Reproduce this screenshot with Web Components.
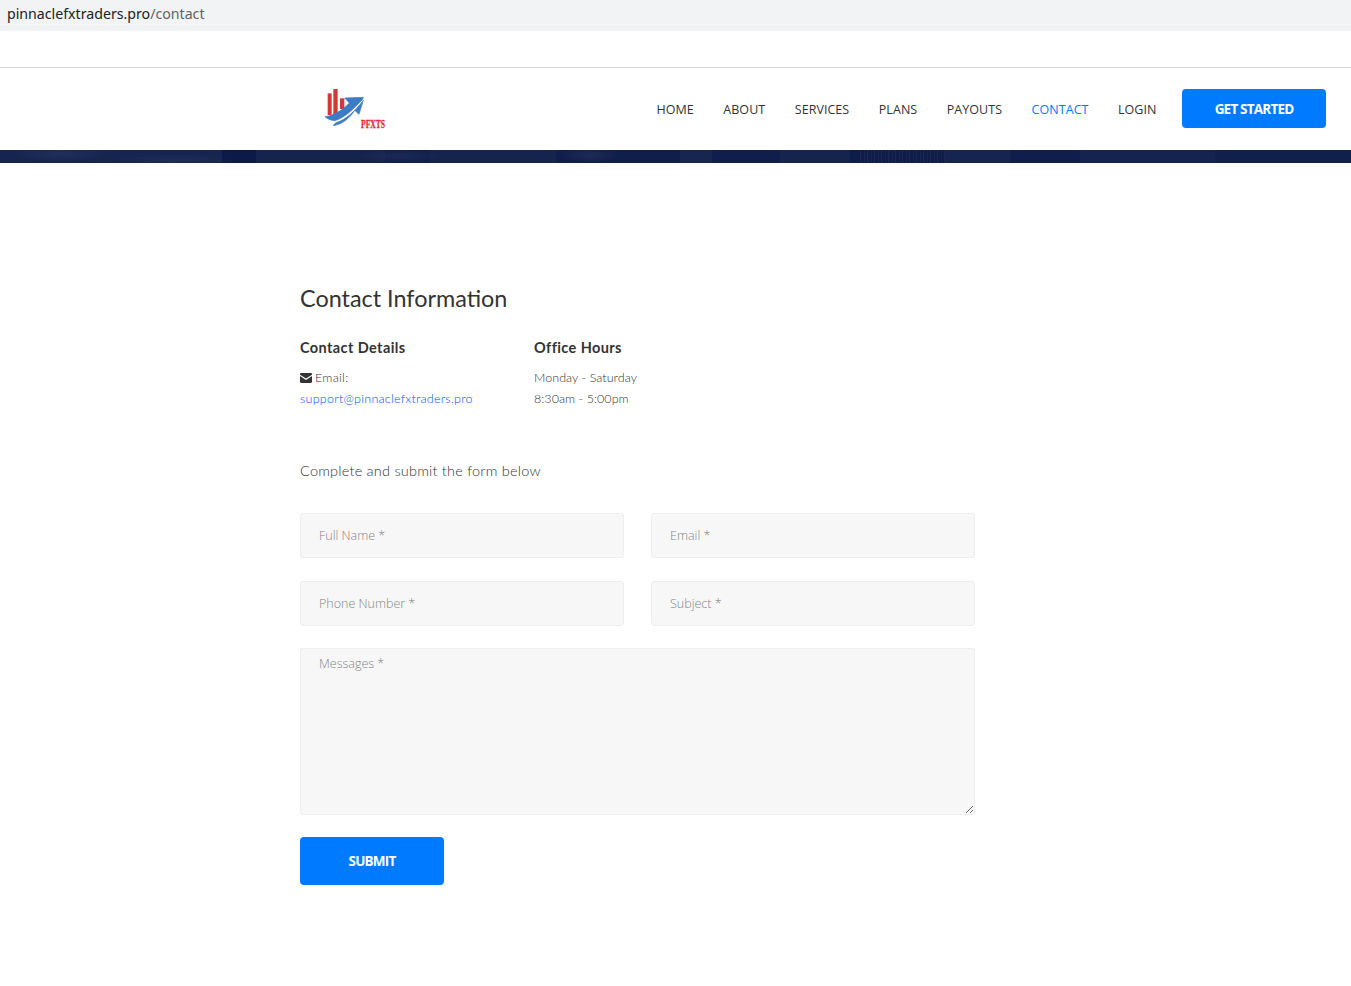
<!DOCTYPE html>
<html lang="en">
<head>
<meta charset="utf-8">
<title>Contact</title>
<style>
  html, body { margin: 0; padding: 0; background: #fff; }
  body { font-family: "Open Sans", sans-serif; color: #333; }
</style>
</head>
<body>
<address-bar></address-bar>
<site-header></site-header>
<page-banner></page-banner>
<contact-section></contact-section>

<script>
class AddressBar extends HTMLElement {
  constructor() {
    super();
    this.attachShadow({ mode: 'open' });
    this.shadowRoot.innerHTML = `
      <style>
        :host { display: block; }
        .url {
          height: 31px;
          background: #f1f3f4;
          padding-left: 7px;
          font: 14.17px/27px "Noto Sans", "Open Sans", sans-serif;
          color: #202124;
        }
        .url span { color: #5f6368; }
        .gap { height: 36px; border-bottom: 1px solid #dadce0; }
      </style>
      <div class="url">pinnaclefxtraders.pro<span>/contact</span></div>
      <div class="gap"></div>
    `;
  }
}

class SiteHeader extends HTMLElement {
  constructor() {
    super();
    this.attachShadow({ mode: 'open' });
    this.shadowRoot.innerHTML = `
      <style>
        :host { display: block; }
        header {
          box-sizing: border-box;
          height: 82px;
          display: flex;
          align-items: center;
          padding: 0 25px 1px 300px;
        }
        svg { display: block; margin-top: 3px; }
        nav {
          margin-left: auto;
          display: flex;
          align-items: center;
          font: 500 12.5px "Open Sans", sans-serif;
          color: #333;
        }
        nav a { color: inherit; text-decoration: none; margin-right: 29.5px; white-space: nowrap; padding-top: 1px; letter-spacing: 0.05px; }
        nav a.active { color: #007bff; }
        nav a.last { margin-right: 25.5px; }
      </style>
      <header>
        <svg width="110" height="70" viewBox="0 0 330 210">
          <rect x="83" y="55" width="12" height="65" fill="#cf3a3d"/>
          <rect x="100" y="42" width="13" height="78" fill="#cf3a3d"/>
          <rect x="120" y="70" width="13" height="32" fill="#cf3a3d"/>
          <g fill="#3d7cc4" stroke="#3d7cc4" stroke-width="2" stroke-linejoin="round">
            <path d="M75 125C95 124 125 108 148 84L134 69L190 67L187 74C160 102 132 130 104 137C92 136 82 131 75 125Z"/>
            <path d="M100 152C128 148 150 128 164 106L177 118L190 76C165 108 137 135 108 143C104 146 101 149 100 152Z"/>
          </g>
          <text x="183" y="160" font-family="Liberation Serif, serif" font-weight="700" font-size="36" textLength="72" lengthAdjust="spacingAndGlyphs" fill="#e0282e" stroke="#e0282e" stroke-width="1">PFXTS</text>
        </svg>
        <nav>
          <a href="#">HOME</a>
          <a href="#">ABOUT</a>
          <a href="#">SERVICES</a>
          <a href="#">PLANS</a>
          <a href="#">PAYOUTS</a>
          <a href="#" class="active">CONTACT</a>
          <a href="#" class="last">LOGIN</a>
          <blue-button width="144" height="39">GET STARTED</blue-button>
        </nav>
      </header>
    `;
  }
}

class PageBanner extends HTMLElement {
  constructor() {
    super();
    this.attachShadow({ mode: 'open' });
    this.shadowRoot.innerHTML = `
      <style>
        :host {
          display: block;
          height: 13px;
          background:
            repeating-linear-gradient(90deg, rgba(255,255,255,.05) 0 1px, transparent 1px 4px, rgba(255,255,255,.03) 4px 5px, transparent 5px 7px) 860px 0 / 85px 100% no-repeat,
            radial-gradient(ellipse 50px 8px at 60px 4px, rgba(255,255,255,.05), transparent),
            radial-gradient(ellipse 60px 7px at 175px 10px, rgba(255,255,255,.04), transparent),
            radial-gradient(ellipse 40px 6px at 400px 6px, rgba(255,255,255,.05), transparent),
            radial-gradient(ellipse 30px 8px at 590px 5px, rgba(255,255,255,.06), transparent),
            linear-gradient(90deg,
              #15254f 0 222px, #0c1a4a 222px 256px, #15244f 256px 385px, #101f4c 385px 430px,
              #15244f 430px 556px, #101e4c 556px 680px, #16264f 680px 712px, #0f1e4c 712px 780px,
              #15244f 780px 850px, #0f1d4b 850px 945px, #152550 945px 1010px, #0f1e4c 1010px 1080px,
              #142350 1080px 1215px, #101f4c 1215px 1351px);
        }
      </style>
    `;
  }
}

class BlueButton extends HTMLElement {
  constructor() {
    super();
    this.attachShadow({ mode: 'open' });
    const w = this.getAttribute('width');
    const h = this.getAttribute('height');
    this.shadowRoot.innerHTML = `
      <style>
        :host { display: block; width: ${w}px; height: ${h}px; }
        button {
          width: 100%;
          height: 100%;
          border: 0;
          border-radius: 4px;
          padding: 0;
          background: #007bff;
          color: #fff;
          font: 700 13.5px "Open Sans", sans-serif;
          letter-spacing: -0.8px;
        }
      </style>
      <button type="button"><slot></slot></button>
    `;
  }
}

class FormField extends HTMLElement {
  constructor() {
    super();
    this.attachShadow({ mode: 'open' });
    const label = this.getAttribute('placeholder');
    const multi = this.hasAttribute('multiline');
    this.shadowRoot.innerHTML = `
      <style>
        :host { display: block; }
        input, textarea {
          display: block;
          box-sizing: border-box;
          width: 100%;
          height: 45px;
          margin: 0;
          padding: 0 18px;
          background: #f7f7f7;
          border: 1px solid #eeeeee;
          border-radius: 3px;
          outline: 0;
          font: 300 12.5px "Open Sans", sans-serif;
          color: #333;
        }
        textarea { height: 167px; padding-top: 6px; line-height: 18px; resize: vertical; }
        ::placeholder { color: #858585; opacity: 1; }
      </style>
      ${multi
        ? `<textarea placeholder="${label}"></textarea>`
        : `<input type="text" placeholder="${label}">`}
    `;
  }
}

class ContactSection extends HTMLElement {
  constructor() {
    super();
    this.attachShadow({ mode: 'open' });
    this.shadowRoot.innerHTML = `
      <style>
        :host { display: block; padding: 120px 0 100px 300px; font-family: Lato, sans-serif; color: #3a3a3a; }
        .wrap { width: 675px; }
        h2 { margin: 0; font: 400 23.4px/30px Lato, sans-serif; color: #333; }
        .cols { display: grid; grid-template-columns: 234px 1fr; margin-top: 24px; }
        h4 { margin: 0 0 8px; font: 700 14.5px/22px Lato, sans-serif; letter-spacing: 0.4px; color: #333; }
        p { margin: 0; font: 300 12.5px/21px Lato, sans-serif; letter-spacing: 0.3px; color: #333; }
        .hours p { letter-spacing: 0.05px; }
        p svg { vertical-align: -1px; margin-right: 3px; }
        a { color: #0050ff; text-decoration: none; letter-spacing: 0.26px; }
        .lead { margin-top: 50px; font: 300 14.5px/24px Lato, sans-serif; letter-spacing: 0.22px; }
        form { margin-top: 30px; display: grid; grid-template-columns: 324px 324px; column-gap: 27px; row-gap: 23px; }
        .full { grid-column: 1 / 3; margin-top: -1px; }
        blue-button { margin-top: -1px; }
      </style>
      <div class="wrap">
        <h2>Contact Information</h2>
        <div class="cols">
          <div>
            <h4>Contact Details</h4>
            <p><svg width="12" height="10" viewBox="0 0 12 10"><path d="M0 1.2C0 .5.5 0 1.2 0h9.600c.7 0 1.200.5 1.200 1.200v.5L6 5.600 0 1.700zM0 3l6 3.900L12 3v5.800c0 .7-.5 1.200-1.200 1.200H1.200C.5 10 0 9.500 0 8.800z" fill="#333"/></svg>Email:</p>
            <p><a href="#">support@pinnaclefxtraders.pro</a></p>
          </div>
          <div class="hours">
            <h4>Office Hours</h4>
            <p>Monday - Saturday</p>
            <p>8:30am - 5:00pm</p>
          </div>
        </div>
        <p class="lead">Complete and submit the form below</p>
        <form>
          <form-field placeholder="Full Name *"></form-field>
          <form-field placeholder="Email *"></form-field>
          <form-field placeholder="Phone Number *"></form-field>
          <form-field placeholder="Subject *"></form-field>
          <form-field class="full" placeholder="Messages *" multiline></form-field>
          <blue-button width="144" height="48">SUBMIT</blue-button>
        </form>
      </div>
    `;
  }
}

customElements.define('address-bar', AddressBar);
customElements.define('blue-button', BlueButton);
customElements.define('site-header', SiteHeader);
customElements.define('page-banner', PageBanner);
customElements.define('form-field', FormField);
customElements.define('contact-section', ContactSection);
</script>
</body>
</html>
